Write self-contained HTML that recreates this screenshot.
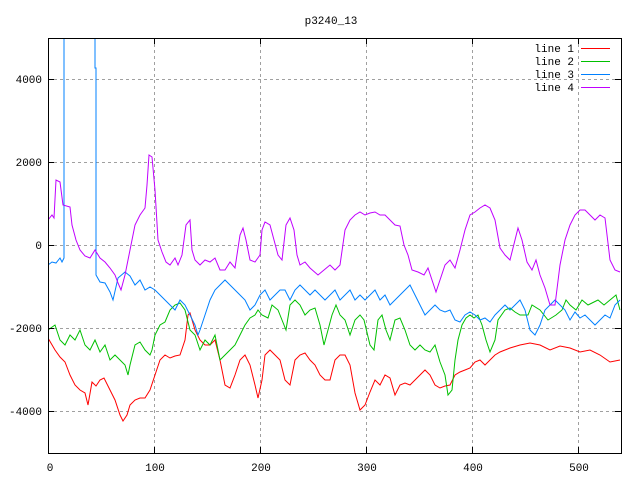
<!DOCTYPE html>
<html><head><meta charset="utf-8"><style>
html,body{margin:0;padding:0;background:#fff;}
svg{display:block;}
text{font-family:"Liberation Mono","DejaVu Sans Mono",monospace;font-size:11px;fill:#000;}
</style></head><body>
<svg width="640" height="480" viewBox="0 0 640 480" xmlns="http://www.w3.org/2000/svg">
<rect width="640" height="480" fill="#fff"/>
<text x="331" y="24" text-anchor="middle">p3240_13</text>
<g stroke="#a0a0a0" stroke-width="1" stroke-dasharray="3,3" fill="none">
<line x1="48" y1="79.5" x2="621" y2="79.5"/>
<line x1="48" y1="162.5" x2="621" y2="162.5"/>
<line x1="48" y1="245.5" x2="621" y2="245.5"/>
<line x1="48" y1="328.5" x2="621" y2="328.5"/>
<line x1="48" y1="411.5" x2="621" y2="411.5"/>
<line x1="154.5" y1="38" x2="154.5" y2="453"/>
<line x1="260.5" y1="38" x2="260.5" y2="453"/>
<line x1="366.5" y1="38" x2="366.5" y2="453"/>
<line x1="472.5" y1="38" x2="472.5" y2="453"/>
<line x1="578.5" y1="38" x2="578.5" y2="453"/>
</g>
<g text-anchor="end">
<text x="42" y="83">4000</text>
<text x="42" y="166">2000</text>
<text x="42" y="249">0</text>
<text x="42" y="332">-2000</text>
<text x="42" y="415">-4000</text>
</g>
<g text-anchor="middle">
<text x="50" y="471">0</text>
<text x="155" y="471">100</text>
<text x="261" y="471">200</text>
<text x="367" y="471">300</text>
<text x="473" y="471">400</text>
<text x="579" y="471">500</text>
</g>
<svg x="48" y="38" width="573" height="415" viewBox="48 38 573 415" overflow="hidden">
<polyline fill="none" stroke="#ff0000" stroke-width="1" points="48,338 55,350 60,357 65,362 70,375 75,385 80,390 85,393 88,405 92,382 96,386 100,380 104,378 110,390 115,400 120,415 123,421 127,415 130,405 135,400 140,398 145,398 150,390 155,375 160,360 165,355 170,358 175,356 180,355 185,340 188,315 190,313 195,330 200,340 205,345 210,345 215,340 220,360 225,385 230,388 235,375 240,360 245,355 250,365 255,385 258,398 262,380 265,355 270,350 275,355 280,360 285,380 290,385 295,360 300,355 305,353 310,360 315,365 320,375 325,380 330,380 335,360 340,355 345,355 350,365 355,393 360,410 365,405 370,392 375,380 380,385 385,375 390,378 395,395 400,385 405,383 410,385 415,380 420,375 425,370 430,375 435,385 440,388 445,386 450,385 455,375 460,372 465,370 470,368 475,362 480,360 485,365 490,360 495,355 500,352 505,350 510,348 520,345 530,343 540,345 550,350 560,346 570,348 580,352 590,350 600,355 610,362 620,360"/>
<polyline fill="none" stroke="#00c000" stroke-width="1" points="48,330 55,325 60,340 65,345 70,335 75,340 80,330 85,345 90,350 95,340 100,352 105,345 110,360 115,355 120,360 125,365 128,375 130,365 135,345 140,342 145,350 150,355 152,350 155,335 160,325 165,322 170,310 175,305 180,303 185,310 190,330 195,335 200,350 205,340 210,345 215,335 220,360 225,355 230,350 235,345 240,335 245,325 250,318 255,315 258,310 262,315 268,318 272,305 278,310 282,320 286,330 290,305 295,300 300,305 305,315 310,310 315,308 320,325 324,345 328,330 332,315 336,305 340,315 345,320 350,335 355,320 360,315 364,320 370,345 374,350 378,320 382,315 386,330 390,340 395,320 400,318 405,330 410,345 415,350 420,345 425,350 430,352 435,345 440,362 445,375 448,395 452,390 455,360 458,340 462,325 466,318 470,315 474,318 478,315 482,325 486,340 490,352 495,340 498,320 505,310 510,308 515,312 520,315 528,315 532,305 540,310 548,320 556,315 562,310 566,300 570,305 576,310 582,300 588,305 592,303 598,300 604,305 610,300 616,295 620,310"/>
<polyline fill="none" stroke="#0080ff" stroke-width="1" points="48,265 52,262 56,263 60,258 62,262 64,258 64,30 95,30 95,68 96,68 96,275 100,282 105,283 110,292 113,300 118,278 125,272 130,276 135,285 140,280 145,290 150,287 155,290 160,295 165,300 170,305 175,310 180,300 185,305 190,315 195,325 198,335 200,330 205,315 210,300 215,290 220,285 225,280 230,285 235,290 240,295 245,300 250,310 255,305 260,295 265,290 270,300 275,295 280,290 285,290 290,300 295,290 300,285 305,290 310,295 315,290 320,295 325,300 330,295 335,290 340,300 345,295 350,290 355,300 360,295 365,300 370,295 375,290 380,300 385,295 390,305 395,300 400,295 405,290 410,285 415,295 420,305 425,315 430,310 435,305 440,310 445,312 450,310 455,320 460,322 465,315 470,312 475,315 480,320 485,318 490,322 495,315 500,310 505,305 510,310 515,305 520,300 525,310 530,330 535,335 540,325 545,310 550,305 555,300 560,305 565,310 570,320 575,312 580,318 585,315 590,320 595,325 600,320 605,315 610,318 615,305 620,300"/>
<polyline fill="none" stroke="#c000ff" stroke-width="1" points="48,220 52,215 54,218 56,180 60,182 63,205 70,207 72,225 76,240 80,250 85,256 90,258 95,250 100,258 105,262 110,268 115,275 118,283 121,290 125,275 128,260 132,240 135,225 140,215 145,208 147,185 149,155 152,157 155,190 158,240 162,252 166,262 170,265 175,258 178,265 182,255 186,225 190,220 192,250 195,260 200,265 205,260 210,262 215,258 220,270 225,270 230,262 235,268 240,235 243,228 246,240 250,260 255,262 260,255 262,230 265,222 270,225 274,240 278,255 282,260 286,225 290,218 294,230 297,255 300,265 305,262 310,268 318,275 324,270 330,265 335,270 340,265 345,230 350,220 355,215 360,212 365,215 370,213 375,212 380,215 385,215 390,220 395,225 400,226 404,245 408,255 412,270 418,272 424,275 428,268 432,280 436,292 440,280 445,265 450,260 455,268 460,250 465,230 470,215 475,212 480,208 485,205 490,208 495,220 500,248 505,255 510,260 515,240 518,228 522,240 527,262 532,270 536,260 540,275 545,288 550,305 555,305 560,265 565,240 570,225 575,215 580,210 585,210 590,215 595,220 600,215 605,218 610,260 615,270 620,272"/>
</svg>
<g stroke="#000" stroke-width="1">
<rect x="48.5" y="38.5" width="573" height="415" fill="none"/>
<line x1="48" y1="79.5" x2="54" y2="79.5"/><line x1="615" y1="79.5" x2="621" y2="79.5"/>
<line x1="48" y1="162.5" x2="54" y2="162.5"/><line x1="615" y1="162.5" x2="621" y2="162.5"/>
<line x1="48" y1="245.5" x2="54" y2="245.5"/><line x1="615" y1="245.5" x2="621" y2="245.5"/>
<line x1="48" y1="328.5" x2="54" y2="328.5"/><line x1="615" y1="328.5" x2="621" y2="328.5"/>
<line x1="48" y1="411.5" x2="54" y2="411.5"/><line x1="615" y1="411.5" x2="621" y2="411.5"/>
<line x1="154.5" y1="453" x2="154.5" y2="447"/><line x1="154.5" y1="38" x2="154.5" y2="44"/>
<line x1="260.5" y1="453" x2="260.5" y2="447"/><line x1="260.5" y1="38" x2="260.5" y2="44"/>
<line x1="366.5" y1="453" x2="366.5" y2="447"/><line x1="366.5" y1="38" x2="366.5" y2="44"/>
<line x1="472.5" y1="453" x2="472.5" y2="447"/><line x1="472.5" y1="38" x2="472.5" y2="44"/>
<line x1="578.5" y1="453" x2="578.5" y2="447"/><line x1="578.5" y1="38" x2="578.5" y2="44"/>
</g>
<g text-anchor="end">
<text x="574" y="52">line 1</text>
<text x="574" y="65">line 2</text>
<text x="574" y="78">line 3</text>
<text x="574" y="91">line 4</text>
</g>
<line x1="581" y1="48.5" x2="610" y2="48.5" stroke="#ff0000"/>
<line x1="581" y1="61.5" x2="610" y2="61.5" stroke="#00c000"/>
<line x1="581" y1="74.5" x2="610" y2="74.5" stroke="#0080ff"/>
<line x1="581" y1="87.5" x2="610" y2="87.5" stroke="#c000ff"/>
</svg>
</body></html>
